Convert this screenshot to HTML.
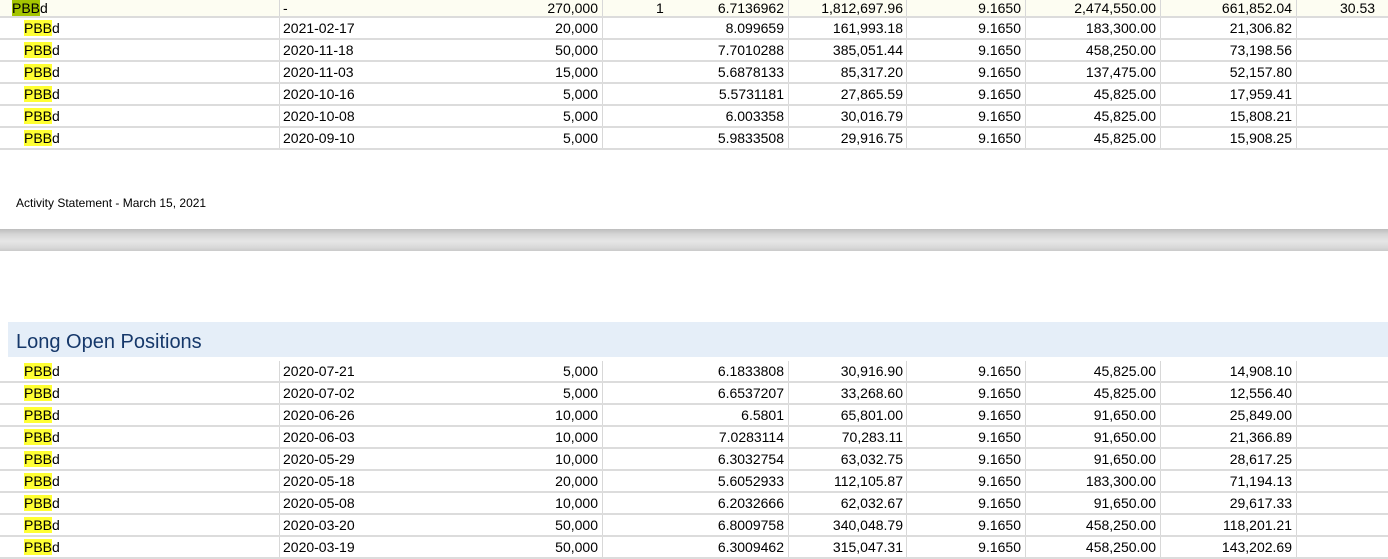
<!DOCTYPE html>
<html><head><meta charset="utf-8"><style>
body{margin:0;width:1388px;height:557px;overflow:hidden;background:#fff;font-family:"Liberation Sans",Arial,sans-serif;font-size:14px;color:#000;position:relative}
.r{position:absolute;left:0;width:1388px;height:22px;border-bottom:2px solid #dcdcdc;box-sizing:border-box}
.c{position:absolute;top:0;height:100%;line-height:21px;white-space:nowrap}
.v{position:absolute;top:0;height:100%;border-left:1px solid #d8d8d8}
.hl{background:#ffff33}
.hg{background:#a4c400}
</style></head><body>
<div id="top"></div>
<div style="position:absolute;left:16px;top:196px;font-size:12px">Activity Statement - March 15, 2021</div>
<div style="position:absolute;left:0;top:229px;width:1388px;height:22px;background:linear-gradient(#bdbdbd,#d6d6d6 25%,#e6e6e6 55%,#d8d8d8 85%,#cacaca)"></div>
<div style="position:absolute;left:8px;top:322px;width:1380px;height:35px;background:#e5eef8"></div>
<div style="position:absolute;left:16px;top:331px;font-size:20px;color:#16386a">Long Open Positions</div>
<div id="bot"></div>
<script>
function row(top,h,d,cells,first,bg){
 var s='<div class="r" style="top:'+top+'px;height:'+h+'px;'+(bg?'background:'+bg+';':'')+'">';
 s+='<div class="c" style="left:'+(first?12:24)+'px"><span class="'+(first?'hg':'hl')+'">PBB</span>d</div>';
 s+='<div class="c" style="left:283px">'+d+'</div>';
 var rights=[598,784,903,1021,1156,1292];
 for(var i=0;i<cells.length;i++) s+='<div class="c" style="left:0;width:'+rights[i]+'px;text-align:right">'+cells[i]+'</div>';
 [279,602,788,906,1025,1160,1296].forEach(function(x){s+='<div class="v" style="left:'+x+'px"></div>'});
 return s+'</div>';
}
var t=[["2021-02-17","20,000","8.099659","161,993.18","21,306.82","183,300.00"],
["2020-11-18","50,000","7.7010288","385,051.44","73,198.56","458,250.00"],
["2020-11-03","15,000","5.6878133","85,317.20","52,157.80","137,475.00"],
["2020-10-16","5,000","5.5731181","27,865.59","17,959.41","45,825.00"],
["2020-10-08","5,000","6.003358","30,016.79","15,808.21","45,825.00"],
["2020-09-10","5,000","5.9833508","29,916.75","15,908.25","45,825.00"]];
var s='<div class="r" style="top:-4px;height:22px;background:#fdfdf2"><div class="c" style="left:12px;top:2px"><span class="hg">PBB</span>d</div><div class="c" style="left:283px;top:2px">-</div>';
var tc=["270,000","6.7136962","1,812,697.96","9.1650","2,474,550.00","661,852.04"],tr=[598,784,903,1021,1156,1292];
for(var i=0;i<6;i++)s+='<div class="c" style="top:2px;left:0;width:'+tr[i]+'px;text-align:right">'+tc[i]+'</div>';
s+='<div class="c" style="top:2px;left:656px">1</div><div class="c" style="top:2px;left:1340px">30.53</div>';
[279,602,788,906,1025,1160,1296].forEach(function(x){s+='<div class="v" style="left:'+x+'px"></div>'});
s+='</div>';
t.forEach(function(r,k){s+=row(18+22*k,22,r[0],[r[1],r[2],r[3],"9.1650",r[5],r[4]])});
document.getElementById('top').innerHTML=s;
var b=[["2020-07-21","5,000","6.1833808","30,916.90","45,825.00","14,908.10"],
["2020-07-02","5,000","6.6537207","33,268.60","45,825.00","12,556.40"],
["2020-06-26","10,000","6.5801","65,801.00","91,650.00","25,849.00"],
["2020-06-03","10,000","7.0283114","70,283.11","91,650.00","21,366.89"],
["2020-05-29","10,000","6.3032754","63,032.75","91,650.00","28,617.25"],
["2020-05-18","20,000","5.6052933","112,105.87","183,300.00","71,194.13"],
["2020-05-08","10,000","6.2032666","62,032.67","91,650.00","29,617.33"],
["2020-03-20","50,000","6.8009758","340,048.79","458,250.00","118,201.21"],
["2020-03-19","50,000","6.3009462","315,047.31","458,250.00","143,202.69"]];
s='';
b.forEach(function(r,k){s+=row(361+22*k,22,r[0],[r[1],r[2],r[3],"9.1650",r[4],r[5]])});
document.getElementById('bot').innerHTML=s;
</script>
</body></html>
